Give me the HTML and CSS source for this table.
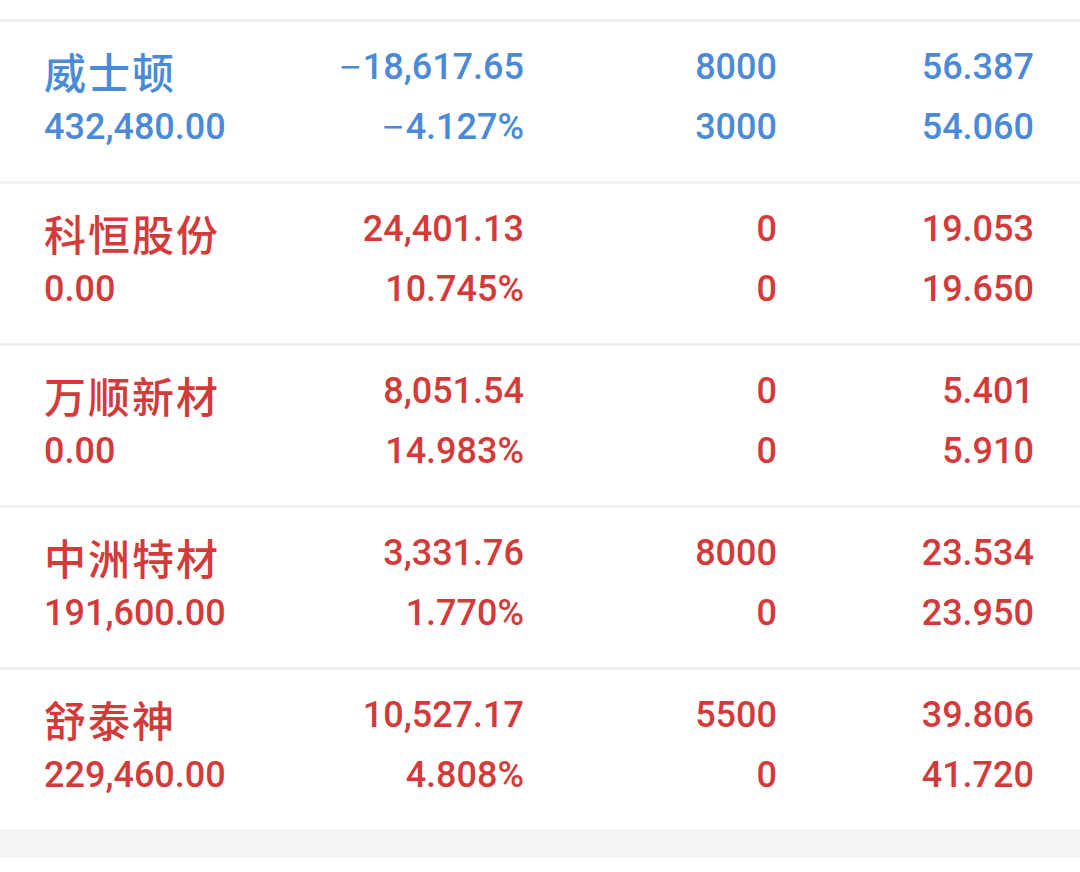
FILE: index.html
```html
<!DOCTYPE html>
<html lang="zh">
<head>
<meta charset="utf-8">
<link rel="stylesheet" href="styles.css">
</head>
<body>
<div class="list">
  <div class="row up">
    <div class="cell left"><div class="name">威士顿</div><div class="val">432,480.00</div></div>
    <div class="cell"><div class="val"><span class="minus">−</span>18,617.65</div><div class="val"><span class="minus">−</span>4.127%</div></div>
    <div class="cell"><div class="val">8000</div><div class="val">3000</div></div>
    <div class="cell"><div class="val">56.387</div><div class="val">54.060</div></div>
  </div>
  <div class="row">
    <div class="cell left"><div class="name">科恒股份</div><div class="val">0.00</div></div>
    <div class="cell"><div class="val">24,401.13</div><div class="val">10.745%</div></div>
    <div class="cell"><div class="val">0</div><div class="val">0</div></div>
    <div class="cell"><div class="val">19.053</div><div class="val">19.650</div></div>
  </div>
  <div class="row">
    <div class="cell left"><div class="name">万顺新材</div><div class="val">0.00</div></div>
    <div class="cell"><div class="val">8,051.54</div><div class="val">14.983%</div></div>
    <div class="cell"><div class="val">0</div><div class="val">0</div></div>
    <div class="cell"><div class="val">5.401</div><div class="val">5.910</div></div>
  </div>
  <div class="row">
    <div class="cell left"><div class="name">中洲特材</div><div class="val">191,600.00</div></div>
    <div class="cell"><div class="val">3,331.76</div><div class="val">1.770%</div></div>
    <div class="cell"><div class="val">8000</div><div class="val">0</div></div>
    <div class="cell"><div class="val">23.534</div><div class="val">23.950</div></div>
  </div>
  <div class="row">
    <div class="cell left"><div class="name">舒泰神</div><div class="val">229,460.00</div></div>
    <div class="cell"><div class="val">10,527.17</div><div class="val">4.808%</div></div>
    <div class="cell"><div class="val">5500</div><div class="val">0</div></div>
    <div class="cell"><div class="val">39.806</div><div class="val">41.720</div></div>
  </div>
</div>
<div class="band"></div>
</body>
</html>
```
FILE: styles.css
```css
html, body {
  margin: 0;
  padding: 0;
  background: #ffffff;
  width: 1080px;
  height: 872px;
  overflow: hidden;
  font-family: Roboto, "Noto Sans CJK SC", sans-serif;
}
.list {
  padding-top: 19px;
}
.row {
  display: grid;
  grid-template-columns: 230px 250px 253px 257px;
  padding: 15px 46px 24px 44px;
  border-top: 3px solid #f2f2f2;
  color: #d43a3a;
}
.row.up {
  color: #4a8ad8;
}
.cell {
  display: flex;
  flex-direction: column;
  text-align: right;
}
.cell.left {
  text-align: left;
}
.val {
  font-size: 36px;
  font-weight: 500;
  line-height: 60px;
  height: 60px;
  white-space: nowrap;
}
.minus {
  font-family: "Liberation Sans", sans-serif;
  font-weight: 400;
  padding-right: 2px;
}
.name {
  font-family: "Noto Sans CJK SC", sans-serif;
  font-size: 42px;
  font-weight: 500;
  letter-spacing: 2px;
  line-height: 60px;
  height: 60px;
  padding-top: 4px;
  margin-bottom: -4px;
  white-space: nowrap;
}
.band {
  height: 29px;
  background: #f5f5f5;
}
```
